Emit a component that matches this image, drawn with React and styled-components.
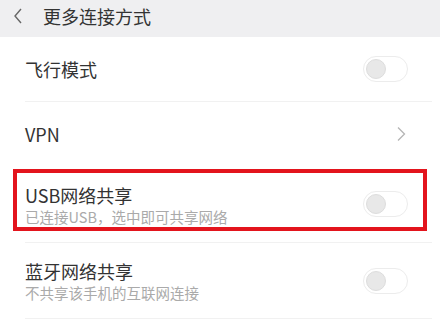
import styled, { createGlobalStyle } from "styled-components";

const Global = createGlobalStyle`
  html, body {
    margin: 0;
    padding: 0;
    background: #ffffff;
    font-family: "Noto Sans CJK SC", "Noto Sans", sans-serif;
  }
`;

const Page = styled.div`
  width: 440px;
  height: 327px;
  overflow: hidden;
  background: #ffffff;
`;

const Header = styled.div`
  height: 37px;
  background: #efeff1;
  display: flex;
  align-items: center;
  padding-left: 12px;
  gap: 19px;
  box-sizing: border-box;
`;

const HeaderTitle = styled.div`
  font-size: 18px;
  color: #333333;
  line-height: 1;
  margin-top: -6px;
`;

const List = styled.div`
  display: flex;
  flex-direction: column;
  padding: 0 8px 0 25px;
`;

const Row = styled.div`
  position: relative;
  height: ${(p) => p.$h}px;
  display: flex;
  align-items: center;
  justify-content: space-between;
  border-bottom: ${(p) => (p.$noLine ? "none" : "1.5px solid #f1f1f1")};
  box-sizing: border-box;
  padding-right: 24px;
`;

const TextCol = styled.div`
  display: flex;
  flex-direction: column;
  gap: 1px;
`;

const Title = styled.div`
  font-size: 18px;
  color: #333333;
  line-height: 24px;
`;

const Sub = styled.div`
  font-size: 14.5px;
  color: #aaaaaa;
  line-height: 18px;
`;

const Toggle = styled.div`
  width: 45px;
  height: 26px;
  border-radius: 13px;
  border: 1.5px solid #ececec;
  background: #ffffff;
  box-sizing: border-box;
  display: flex;
  align-items: center;
  padding-left: 2px;
`;

const Knob = styled.div`
  width: 20px;
  height: 20px;
  border-radius: 50%;
  background: #e8e8e8;
  border: 1px solid #dddddd;
  box-sizing: border-box;
`;

const Highlight = styled.div`
  position: absolute;
  left: -12px;
  right: 5px;
  top: 3px;
  height: 62px;
  border: 4px solid #e3141d;
  box-sizing: border-box;
  pointer-events: none;
`;

const Back = () => (
  <svg width="12" height="18" viewBox="0 0 12 18" style={{ marginTop: -6 }}>
    <path d="M9 2 L3 9 L9 16" fill="none" stroke="#666" strokeWidth="1.4" />
  </svg>
);

const Chevron = () => (
  <svg width="10" height="16" viewBox="0 0 10 16" style={{ marginRight: 2 }}>
    <path d="M2 1.5 L8.5 8 L2 14.5" fill="none" stroke="#b5b5b5" strokeWidth="1.3" />
  </svg>
);

const Switch = () => (
  <Toggle>
    <Knob />
  </Toggle>
);

export default function App() {
  return (
    <Page>
      <Global />
      <Header>
        <Back />
        <HeaderTitle>更多连接方式</HeaderTitle>
      </Header>
      <List>
        <Row $h={65}>
          <Title>飞行模式</Title>
          <Switch />
        </Row>
        <Row $h={64} $noLine>
          <Title>VPN</Title>
          <Chevron />
        </Row>
        <Row $h={77}>
          <Highlight />
          <TextCol>
            <Title>USB网络共享</Title>
            <Sub>已连接USB，选中即可共享网络</Sub>
          </TextCol>
          <Switch />
        </Row>
        <Row $h={76}>
          <TextCol>
            <Title>蓝牙网络共享</Title>
            <Sub>不共享该手机的互联网连接</Sub>
          </TextCol>
          <Switch />
        </Row>
      </List>
    </Page>
  );
}
